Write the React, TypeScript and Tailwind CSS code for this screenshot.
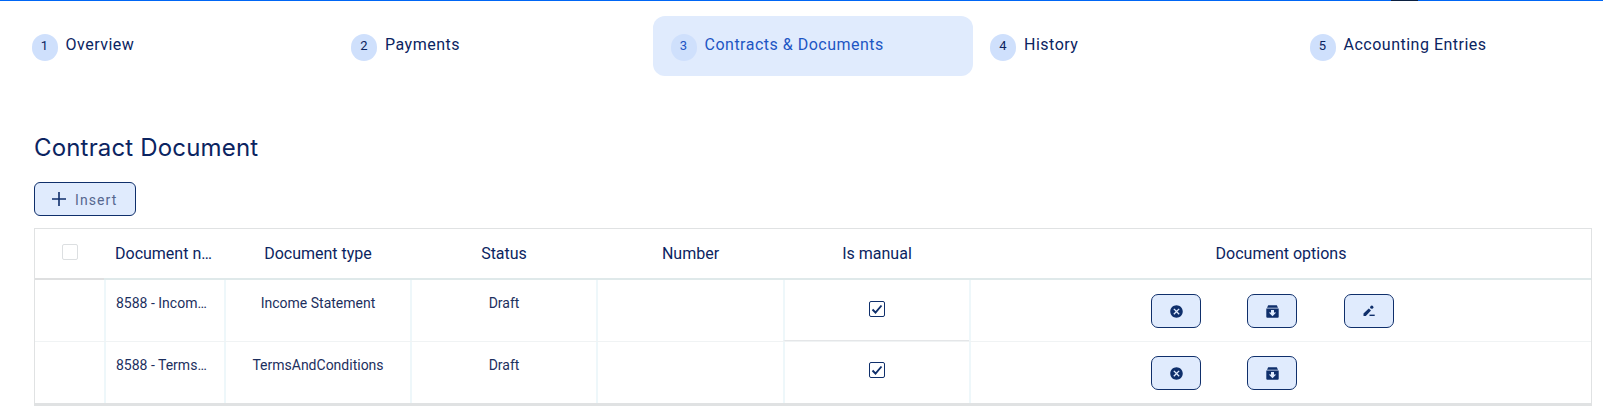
import { MdCancel } from "react-icons/md";

const navy = "text-[#0b2461]";

function Tab({ n, label, active }: { n: number; label: string; active?: boolean }) {
  return (
    <div
      className={`flex h-[60px] w-[319.5px] shrink-0 items-start rounded-[12px] pl-[17.5px] pt-[18px] ${
        active ? "bg-[#e0ebfd] text-[#1d56c4]" : navy
      }`}
    >
      <span className="flex h-[27px] w-[26px] shrink-0 items-center justify-center rounded-full bg-[#cfe0fc] pb-[3px] text-[13px]">
        {n}
      </span>
      <span className="ml-[8px] text-[16px] leading-[22px] tracking-[0.5px]">{label}</span>
    </div>
  );
}

function EditIcon() {
  return (
    <svg width="12" height="12" viewBox="0 0 12 12" fill="currentColor">
      <path d="M0.5 8.6 5.8 3.4 8 5.6 2.8 11H0.5z" />
      <circle cx="8.8" cy="2.2" r="1.6" />
      <rect x="6.5" y="9.6" width="5.2" height="1.4" />
    </svg>
  );
}

function ArchiveIcon() {
  return (
    <svg width="13" height="13" viewBox="0 0 13 13" fill="currentColor">
      <path d="M2.2 0.2h8.6l1.2 2.6H1z" />
      <path
        fillRule="evenodd"
        d="M0.3 3.5h12.4V11.8a1 1 0 0 1-1 1H1.3a1 1 0 0 1-1-1zM5 5v2.6H2.8l3.7 3.7 3.7-3.7H8V5z"
      />
    </svg>
  );
}

function ActionButton({ children }: { children: React.ReactNode }) {
  return (
    <button className="flex h-[34px] w-[50px] items-center justify-center rounded-[7px] border border-[#0f2f6b] bg-[#e0ebfd] text-[#0f2f6b]">
      {children}
    </button>
  );
}

function Check() {
  return (
    <span className="flex h-[16px] w-[16px] items-center justify-center rounded-[2px] border border-[#0f2f6b] bg-white text-[#0f2f6b]">
      <svg width="12" height="12" viewBox="0 0 12 12" fill="none" stroke="currentColor" strokeWidth="1.9">
        <path d="M1.5 6.5 4.5 9.5 10.5 2.5" />
      </svg>
    </span>
  );
}

const cols = "grid grid-cols-[69px_120px_186px_186px_187px_186px_1fr]";
const cell = "border-l-2 border-[#eef7fa] flex justify-center";

function Row({ name, type, edit, last }: { name: string; type: string; edit?: boolean; last?: boolean }) {
  return (
    <div
      className={`${cols} text-[14px] leading-[18px] text-[#1c2f5e] ${
        last ? "h-[61px]" : "h-[62px] border-b border-[#f0f3f4]"
      }`}
    >
      <div />
      <div className={`${cell} pl-[10px] pr-[16px] pt-[14px]`}>
        <span className="w-full truncate">{name}</span>
      </div>
      <div className={`${cell} pt-[14px]`}>{type}</div>
      <div className={`${cell} pt-[14px]`}>Draft</div>
      <div className={cell} />
      <div className={`${cell} ${last ? "pt-[20px]" : "pt-[21px] border-b border-b-[#e4e6e8]"}`}>
        <Check />
      </div>
      <div className={`${cell} !justify-start gap-[46px] pl-[180px] pt-[14px]`}>
        <ActionButton>
          <MdCancel size={15} />
        </ActionButton>
        <ActionButton>
          <ArchiveIcon />
        </ActionButton>
        {edit && (
          <div className="ml-px">
            <ActionButton>
              <EditIcon />
            </ActionButton>
          </div>
        )}
      </div>
    </div>
  );
}

export default function App() {
  return (
    <div className="relative h-[409px] overflow-hidden bg-white font-['Roboto',sans-serif]">
      <div className="h-px bg-[#0066f5]" />
      <div className="absolute left-[1391px] top-0 h-px w-[27px] bg-[#0b2040]" />

      <div className="ml-[14px] mt-[15px] flex">
        <Tab n={1} label="Overview" />
        <Tab n={2} label="Payments" />
        <Tab n={3} label="Contracts & Documents" active />
        <Tab n={4} label="History" />
        <Tab n={5} label="Accounting Entries" />
      </div>

      <div className="ml-[34px] mr-[11px] mt-[57px]">
        <h2 className={`font-['Inter',sans-serif] text-[24px] font-normal leading-[30px] tracking-[0.17px] ${navy}`}>
          Contract Document
        </h2>

        <button className="mt-[19px] flex h-[34px] w-[102px] items-center rounded-[6px] border border-[#0f2f6b] bg-[#e0ebfd] pl-[16px] text-[14px] text-[#56678f]">
          <svg width="16" height="16" viewBox="0 0 16 16" fill="none" stroke="#0f2f6b" strokeWidth="1.6">
            <path d="M8 1v14M1 8h14" />
          </svg>
          <span className="ml-[8px] pt-[2px] tracking-[1.1px]">Insert</span>
        </button>

        <div className="mt-[12px] border-x border-t border-[#e0e2e3] border-b-[3px] border-b-[#e0e2e3]">
          <div className={`${cols} h-[51px] border-b-2 border-[#dfe9ea] text-[16px] leading-[20px] ${navy}`}>
            <div className="-mb-[2px] flex justify-center border-b-2 border-[#dedfe0] pt-[15px]">
              <span className="h-[16px] w-[16px] rounded-[2px] border border-[#dcdfe1] bg-white" />
            </div>
            <div className="pl-[11px] pr-[10px] pt-[15px]">
              <span className="block truncate">Document name</span>
            </div>
            <div className="pl-[2px] pt-[15px] text-center">Document type</div>
            <div className="pl-[2px] pt-[15px] text-center">Status</div>
            <div className="pl-[2px] pt-[15px] text-center">Number</div>
            <div className="pl-[2px] pt-[15px] text-center">Is manual</div>
            <div className="pl-[2px] pt-[15px] text-center">Document options</div>
          </div>
          <Row name="8588 - Income Statement" type="Income Statement" edit />
          <Row name="8588 - TermsAndConditions" type="TermsAndConditions" last />
        </div>
      </div>
    </div>
  );
}
